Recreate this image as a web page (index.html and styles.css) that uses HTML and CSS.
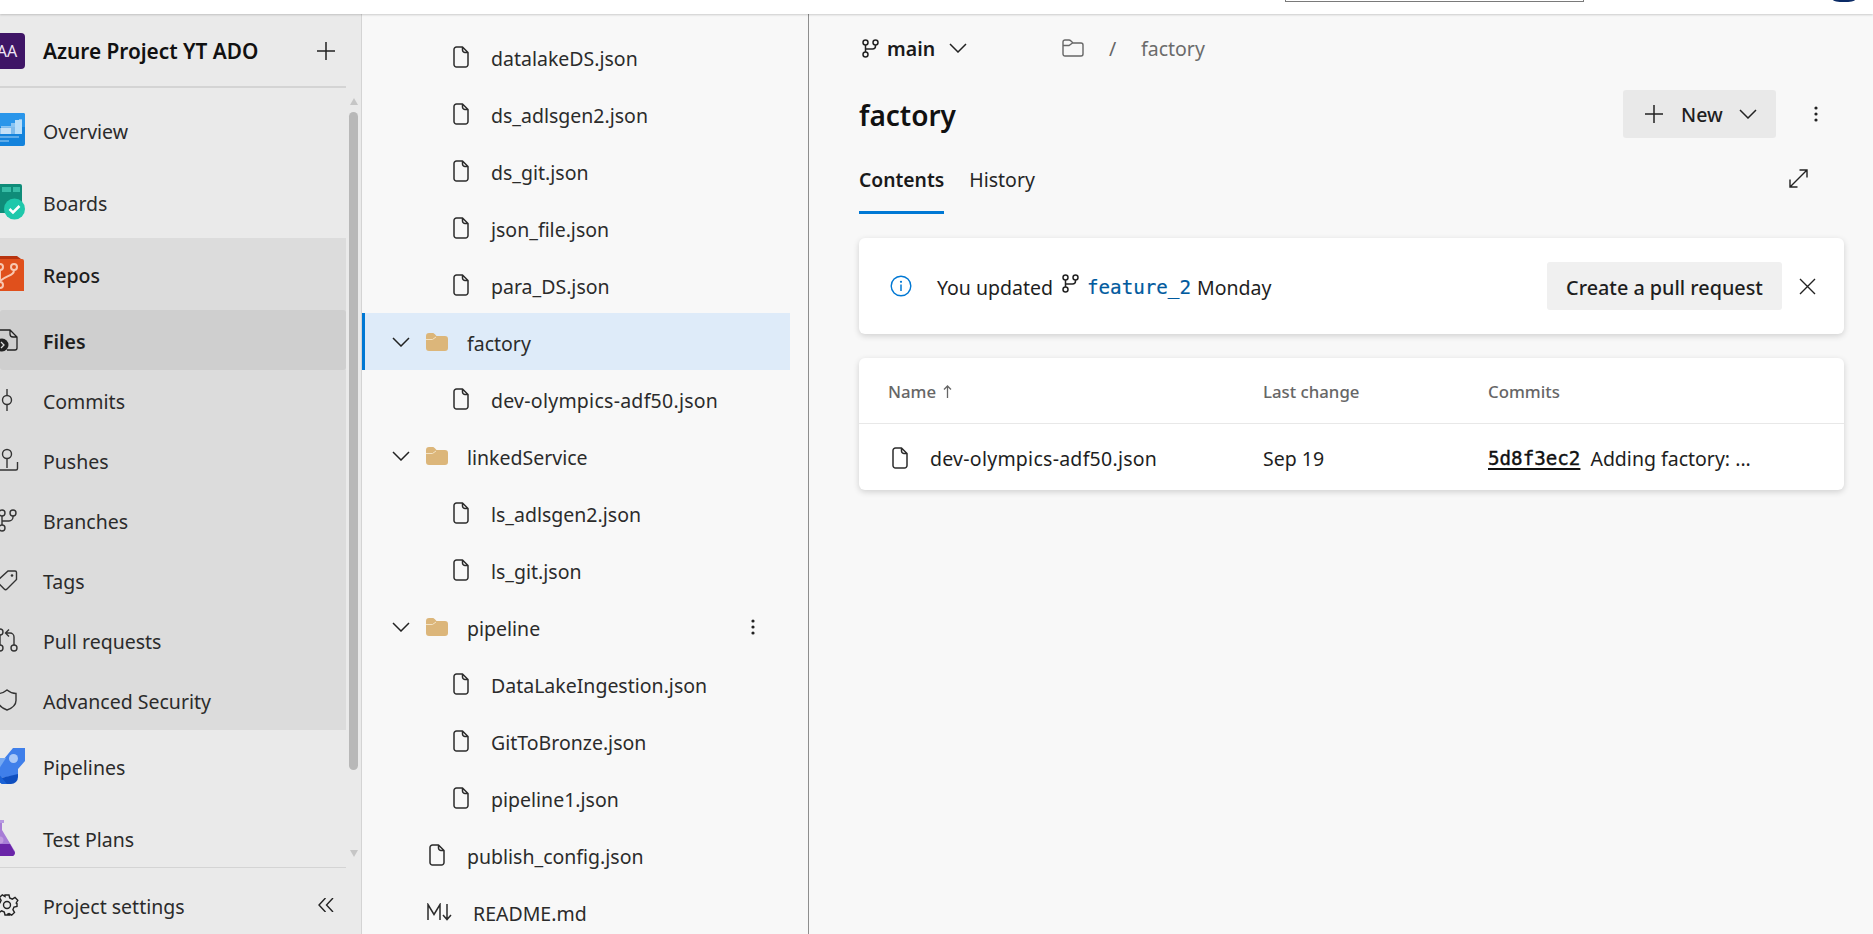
FILE: index.html
```html
<!DOCTYPE html>
<html lang="en">
<head>
<meta charset="utf-8">
<title>factory - Repos</title>
<link rel="stylesheet" href="styles.css">
</head>
<body>
<svg class="defs" width="0" height="0" aria-hidden="true">
  <symbol id="i-file" viewBox="0 0 16 22"><path d="M3.500 1h6L15 6.500v12a2.500 2.500 0 0 1-2.500 2.500h-9A2.500 2.500 0 0 1 1 18.500v-15A2.500 2.500 0 0 1 3.500 1zM9.500 1v3a2.500 2.500 0 0 0 2.500 2.500h3" fill="none" stroke="#2b2b2b" stroke-width="1.500" stroke-linejoin="round"/></symbol>
  <symbol id="i-folder" viewBox="0 0 22 18"><path d="M0 3a3 3 0 0 1 3-3h3.500c1 0 1.500.4 2.200 1.100L10.500 3H19a3 3 0 0 1 3 3v9a3 3 0 0 1-3 3H3a3 3 0 0 1-3-3z" fill="#dcb67a"/><path d="M0 6.500h6.500L10 4" fill="none" stroke="#f4e3c4" stroke-width="1"/></symbol>
  <symbol id="i-chev" viewBox="0 0 18 10"><path d="M1 1l8 8 8-8" fill="none" stroke="#222" stroke-width="1.500"/></symbol>
  <symbol id="i-branch" viewBox="0 0 17 19"><g fill="none" stroke="#222" stroke-width="1.500"><circle cx="3.500" cy="3.500" r="2.500"/><circle cx="13.500" cy="3.500" r="2.500"/><circle cx="3.500" cy="15.500" r="2.500"/><path d="M3.500 6v7M13.500 6v1a3 3 0 0 1-3 3h-7"/></g></symbol>
  <symbol id="i-plus" viewBox="0 0 18 18"><path d="M9 0v18M0 9h18" stroke="#222" stroke-width="1.500"/></symbol>
  <symbol id="i-kebab" viewBox="0 0 4 16"><circle cx="2" cy="2" r="1.600" fill="#222"/><circle cx="2" cy="8" r="1.600" fill="#222"/><circle cx="2" cy="14" r="1.600" fill="#222"/></symbol>
</svg>

<header class="topbar">
  <div class="search-edge"></div>
  <div class="avatar-edge"></div>
</header>

<div class="app">
  <aside class="sidebar">
    <div class="project">
      <span class="slot"><span class="avatar">AA</span></span>
      <span class="project-name">Azure Project YT ADO</span>
      <svg class="project-add"><use href="#i-plus"/></svg>
    </div>

    <nav class="nav">
      <a class="nav-row">
        <span class="slot"><svg class="svc" viewBox="0 0 36 36"><rect y="1" width="36" height="33" rx="2" fill="#1483dc"/><path d="M0 1h34a2 2 0 0 1 2 2v12H0z" fill="#2a96ea"/><path d="M12 14h10V11h8V7h3v15H12z" fill="#ffffff" opacity=".45"/><path d="M11 16h11v6H11z" fill="#ffffff" opacity=".55"/><path d="M26 8h7v14h-7z" fill="#b9def9"/><path d="M0 25h30" stroke="#a8d4f5" stroke-width="1"/><path d="M0 29h20" stroke="#a8d4f5" stroke-width="1"/></svg></span>
        <span class="lbl">Overview</span>
      </a>
      <a class="nav-row">
        <span class="slot"><svg class="svc" viewBox="0 0 36 36"><rect y="0" width="33" height="29" rx="2" fill="#0f8c79"/><rect x="2" y="3" width="9" height="5" fill="#66e0c8"/><rect x="13" y="3" width="9" height="5" fill="#36bca5"/><rect x="24" y="3" width="7" height="5" fill="#36bca5"/><rect x="2" y="11" width="9" height="5" fill="#36bca5"/><circle cx="25.500" cy="25" r="10.500" fill="#1fc8ab"/><path d="M20.500 25l3.500 3.500 6.500-6.500" fill="none" stroke="#fff" stroke-width="2.500"/></svg></span>
        <span class="lbl">Boards</span>
      </a>
      <div class="nav-group">
        <a class="nav-row is-strong">
          <span class="slot"><svg class="svc" viewBox="0 0 36 36"><path d="M0 0h28l4 3H0z" fill="#b8330e"/><path d="M0 3h33a2 2 0 0 1 2 2v30H0z" fill="#e0501c"/><g fill="none" stroke="#f8c7b0" stroke-width="2"><circle cx="11" cy="11" r="3"/><circle cx="25" cy="11" r="3"/><circle cx="11" cy="29" r="3"/><path d="M11 14v12M25 14c0 6-7 5-14 11"/></g></svg></span>
          <span class="lbl">Repos</span>
        </a>
        <a class="sub-row is-current">
          <span class="slot"><svg class="glyph" viewBox="0 0 24 24"><path d="M5 2h10l7 7v11a2 2 0 0 1-2 2h-8M15 2v4a3 3 0 0 0 3 3h4" fill="none" stroke="#222" stroke-width="1.300"/><circle cx="7" cy="17" r="6.500" fill="#222"/><path d="M6 14l3 3-3 3" fill="none" stroke="#ddd" stroke-width="1.300"/></svg></span>
          <span class="lbl">Files</span>
        </a>
        <a class="sub-row">
          <span class="slot"><svg class="glyph" viewBox="0 0 24 24"><g fill="none" stroke="#333" stroke-width="1.400"><circle cx="12" cy="12" r="4.500"/><path d="M12 1v6.500M12 16.500V23"/></g></svg></span>
          <span class="lbl">Commits</span>
        </a>
        <a class="sub-row">
          <span class="slot"><svg class="glyph" viewBox="0 0 24 24"><g fill="none" stroke="#333" stroke-width="1.400"><circle cx="12" cy="6" r="4.500"/><path d="M12 10.500V20M0 22h21a1.500 1.500 0 0 0 1.500-1.500V14"/></g></svg></span>
          <span class="lbl">Pushes</span>
        </a>
        <a class="sub-row">
          <span class="slot"><svg class="glyph" viewBox="0 0 24 24"><g fill="none" stroke="#333" stroke-width="1.400"><circle cx="7" cy="5" r="3"/><circle cx="18" cy="5" r="3"/><circle cx="7" cy="20" r="3"/><path d="M7 8v9M18 8v1a4 4 0 0 1-4 4H7"/></g></svg></span>
          <span class="lbl">Branches</span>
        </a>
        <a class="sub-row">
          <span class="slot"><svg class="glyph" viewBox="0 0 24 24"><g fill="none" stroke="#333" stroke-width="1.400"><path d="M13 3h7a1.500 1.500 0 0 1 1.500 1.500v7L12 21a2 2 0 0 1-2.800 0L3 14.800a2 2 0 0 1 0-2.800z"/></g><circle cx="17" cy="7.500" r="1.300" fill="#333"/></svg></span>
          <span class="lbl">Tags</span>
        </a>
        <a class="sub-row">
          <span class="slot"><svg class="glyph" viewBox="0 0 24 24"><g fill="none" stroke="#333" stroke-width="1.400"><circle cx="5" cy="4" r="3"/><circle cx="5" cy="20" r="3"/><circle cx="19" cy="20" r="3"/><path d="M5 7v10M19 17V9a4 4 0 0 0-4-4h-4M14 1.500L10.500 5l3.500 3.500"/></g></svg></span>
          <span class="lbl">Pull requests</span>
        </a>
        <a class="sub-row">
          <span class="slot"><svg class="glyph" viewBox="0 0 24 24"><path d="M12 2c3 2.500 6 3.500 9 3.500v7c0 4.500-3.500 7.500-9 9.500-5.500-2-9-5-9-9.500v-7c3 0 6-1 9-3.500z" fill="none" stroke="#333" stroke-width="1.400"/></svg></span>
          <span class="lbl">Advanced Security</span>
        </a>
      </div>
      <a class="nav-row">
        <span class="slot"><svg class="svc" viewBox="0 0 36 36"><path d="M24 0h12v13l-7 8v6L12 30 5 23z" fill="#3f7fea"/><path d="M0 25L11 10h6L4 30z" fill="#74a8f2"/><path d="M8 31l21-5v3a7 7 0 0 1-7 7H13z" fill="#0f4fc0"/><path d="M13 36l-9-6 5-5 9 11z" fill="#1a62d6"/><circle cx="24.500" cy="10.500" r="4.500" fill="#a9c8f7"/></svg></span>
        <span class="lbl">Pipelines</span>
      </a>
      <a class="nav-row">
        <span class="slot"><svg class="svc" viewBox="0 0 36 36"><path d="M0 0h15v3H13v7l12 20a3 3 0 0 1-3 5H0z" fill="#a77dd6"/><path d="M0 0h15v3H0z" fill="#b79ae0"/><path d="M0 24h21l4 7a3 3 0 0 1-3 5H0z" fill="#6a25a8"/><circle cx="4" cy="24" r="6" fill="#cfaee9"/><circle cx="11" cy="20" r="3.500" fill="#c09bdf"/></svg></span>
        <span class="lbl">Test Plans</span>
      </a>
    </nav>

    <div class="settings">
      <span class="slot"><svg class="glyph" viewBox="0 0 24 24"><g fill="none" stroke="#222" stroke-width="1.400"><circle cx="12" cy="12" r="3.500"/><path d="M10 2h4l.7 3 2.600 1.100 2.700-1.600 2.800 2.800-1.600 2.700L22 10.600v2.800l-3 .7-1.100 2.600 1.600 2.700-2.800 2.800-2.700-1.600-1 .4L14 22h-4l-.7-3-2.600-1.100L4 19.500 1.200 16.700l1.600-2.700L2 13.400v-2.800l3-.7L6.100 7.300 4.500 4.600 7.300 1.800 10 3.400z"/></g></svg></span>
      <span class="lbl">Project settings</span>
      <svg class="collapse" viewBox="0 0 16 14"><path d="M7.500 0L1 7l6.500 7M15 0L8.500 7l6.500 7" fill="none" stroke="#222" stroke-width="1.400"/></svg>
    </div>

    <div class="scrollbar">
      <span class="arrow-up"></span>
      <span class="thumb"></span>
      <span class="arrow-down"></span>
    </div>
  </aside>

  <section class="tree">
    <div class="t-row lvl2"><svg class="ic-file"><use href="#i-file"/></svg><span class="name">datalakeDS.json</span></div>
    <div class="t-row lvl2"><svg class="ic-file"><use href="#i-file"/></svg><span class="name">ds_adlsgen2.json</span></div>
    <div class="t-row lvl2"><svg class="ic-file"><use href="#i-file"/></svg><span class="name">ds_git.json</span></div>
    <div class="t-row lvl2"><svg class="ic-file"><use href="#i-file"/></svg><span class="name">json_file.json</span></div>
    <div class="t-row lvl2"><svg class="ic-file"><use href="#i-file"/></svg><span class="name">para_DS.json</span></div>
    <div class="t-row lvl1 is-selected"><svg class="ic-chev"><use href="#i-chev"/></svg><svg class="ic-folder"><use href="#i-folder"/></svg><span class="name">factory</span></div>
    <div class="t-row lvl2"><svg class="ic-file"><use href="#i-file"/></svg><span class="name wide">dev-olympics-adf50.json</span></div>
    <div class="t-row lvl1"><svg class="ic-chev"><use href="#i-chev"/></svg><svg class="ic-folder"><use href="#i-folder"/></svg><span class="name">linkedService</span></div>
    <div class="t-row lvl2"><svg class="ic-file"><use href="#i-file"/></svg><span class="name">ls_adlsgen2.json</span></div>
    <div class="t-row lvl2"><svg class="ic-file"><use href="#i-file"/></svg><span class="name">ls_git.json</span></div>
    <div class="t-row lvl1"><svg class="ic-chev"><use href="#i-chev"/></svg><svg class="ic-folder"><use href="#i-folder"/></svg><span class="name">pipeline</span><svg class="ic-kebab"><use href="#i-kebab"/></svg></div>
    <div class="t-row lvl2"><svg class="ic-file"><use href="#i-file"/></svg><span class="name">DataLakeIngestion.json</span></div>
    <div class="t-row lvl2"><svg class="ic-file"><use href="#i-file"/></svg><span class="name">GitToBronze.json</span></div>
    <div class="t-row lvl2"><svg class="ic-file"><use href="#i-file"/></svg><span class="name">pipeline1.json</span></div>
    <div class="t-row lvl1-file"><svg class="ic-file"><use href="#i-file"/></svg><span class="name">publish_config.json</span></div>
    <div class="t-row lvl1-md"><svg class="ic-md" viewBox="0 0 25 18"><path d="M1 17V1.500l6 10 6-10V17M20 1v15M16 12l4 4.500 4-4.500" fill="none" stroke="#2b2b2b" stroke-width="1.500"/></svg><span class="name">README.md</span></div>
  </section>

  <main class="content">
    <div class="crumbs">
      <svg class="ic-branch"><use href="#i-branch"/></svg>
      <span class="branch-name">main</span>
      <svg class="ic-branch-chev"><use href="#i-chev"/></svg>
      <svg class="ic-crumb-folder" viewBox="0 0 22 18"><path d="M1 3a2 2 0 0 1 2-2h4c1 0 1.500.5 2 1l2 2h8a2 2 0 0 1 2 2v9a2 2 0 0 1-2 2H3a2 2 0 0 1-2-2zM1 6.500h6L10.500 4" fill="none" stroke="#666" stroke-width="1.400"/></svg>
      <span class="crumb-sep">/</span>
      <span class="crumb">factory</span>
    </div>

    <div class="title-row">
      <h1 class="title">factory</h1>
      <button class="btn-new"><svg class="ic-new-plus"><use href="#i-plus"/></svg><span>New</span><svg class="ic-new-chev"><use href="#i-chev"/></svg></button>
      <svg class="ic-more"><use href="#i-kebab"/></svg>
    </div>

    <div class="tabs">
      <span class="tab is-active">Contents</span>
      <span class="tab">History</span>
      <svg class="ic-expand" viewBox="0 0 19 19"><path d="M18 1L1 18M10.500 1H18v7.500M1 10.500V18h7.500" fill="none" stroke="#222" stroke-width="1.400"/></svg>
    </div>

    <div class="card banner">
      <svg class="ic-info" viewBox="0 0 22 22"><circle cx="11" cy="11" r="9.800" fill="none" stroke="#0078d4" stroke-width="1.400"/><circle cx="11" cy="6.800" r="1.100" fill="#0078d4"/><path d="M11 9.500v6.500" stroke="#0078d4" stroke-width="1.500"/></svg>
      <span class="banner-text">You updated</span>
      <svg class="ic-branch-sm"><use href="#i-branch"/></svg>
      <span class="banner-branch">feature_2</span>
      <span class="banner-text">Monday</span>
      <button class="btn-pr">Create a pull request</button>
      <svg class="ic-close" viewBox="0 0 17 17"><path d="M1 1l15 15M16 1L1 16" stroke="#222" stroke-width="1.400"/></svg>
    </div>

    <div class="card table">
      <div class="t-head">
        <span class="head-name">Name <svg class="sort" viewBox="0 0 9 13"><path d="M4.500 13V1M1 4.500L4.500 1 8 4.500" fill="none" stroke="#666" stroke-width="1.300"/></svg></span>
        <span>Last change</span>
        <span>Commits</span>
      </div>
      <div class="t-body">
        <span class="cell-name"><svg class="ic-file-sm"><use href="#i-file"/></svg><span class="wide">dev-olympics-adf50.json</span></span>
        <span>Sep 19</span>
        <span class="cell-commit"><a class="sha">5d8f3ec2</a><span>Adding factory: ...</span></span>
      </div>
    </div>
  </main>
</div>
</body>
</html>
```

FILE: styles.css
```css
* { box-sizing: border-box; }
html, body { margin: 0; height: 100%; }
body {
  width: 1873px;
  height: 934px;
  overflow: hidden;
  background: #f8f8f8;
  color: #262626;
  font-family: "Noto Sans", "Open Sans", "Liberation Sans", sans-serif;
  font-size: 19.5px;
}
.defs { position: absolute; }
svg { display: block; flex: none; }
h1 { margin: 0; }
button { font: inherit; border: 0; color: inherit; }
.wide { letter-spacing: .26px; }

/* top */
.topbar {
  height: 14px;
  background: #fff;
  display: flex;
  box-shadow: 0 1px 2px rgba(0,0,0,.18);
  position: relative;
  z-index: 2;
}
.search-edge {
  width: 299px;
  height: 2px;
  margin-left: 1285px;
  border: 1px solid #7a7a7a;
  border-top: 0;
}
.avatar-edge {
  width: 22px;
  height: 2px;
  margin-left: 249px;
  background: #0b2b66;
  border-radius: 0 0 11px 11px / 0 0 2px 2px;
}

.app { display: flex; height: 920px; }

/* sidebar */
.sidebar {
  width: 362px;
  flex: none;
  background: #eaeaea;
  border-right: 1px solid #d4d4d4;
  display: flex;
  flex-direction: column;
  position: relative;
  color: #2b2b2b;
}
.slot {
  width: 36px;
  margin-left: -11px;
  margin-right: 18px;
  flex: none;
  display: flex;
  justify-content: center;
}
.lbl { padding-top: 2px; }
.project {
  height: 74px;
  margin-right: 15px;
  padding-top: 2px;
  border-bottom: 2px solid #d4d4d4;
  display: flex;
  align-items: center;
}
.avatar {
  width: 36px;
  height: 36px;
  border-radius: 4px;
  background: #3f1566;
  color: #efe6f7;
  font-size: 16px;
  display: flex;
  align-items: center;
  justify-content: center;
}
.project-name { font-weight: 600; color: #111; font-size: 20.800px; }
.project-add { width: 18px; height: 18px; margin-left: auto; margin-right: 11px; }
.nav { height: 779px; margin-right: 15px; padding-top: 6px; overflow: hidden; }
.nav-row { height: 72px; display: flex; align-items: center; }
.nav-row.is-strong { font-weight: 500; color: #1e1e1e; }
.nav-group { background: #dcdcdc; }
.sub-row { height: 60px; display: flex; align-items: center; }
.sub-row.is-current { background: #cfcfcf; font-weight: 600; border-radius: 3px; color: #1e1e1e; }
.svc { width: 36px; height: 36px; }
.glyph { width: 24px; height: 24px; }
.settings {
  height: 67px;
  margin-right: 15px;
  padding-top: 8px;
  border-top: 1px solid #d4d4d4;
  display: flex;
  align-items: center;
}
.collapse { width: 16px; height: 14px; margin-left: auto; margin-right: 12px; }

/* overlay scrollbar */
.scrollbar {
  position: absolute;
  left: 349px;
  top: 84px;
  width: 9px;
  display: flex;
  flex-direction: column;
  align-items: center;
}
.arrow-up { border: 4.500px solid transparent; border-top: 0; border-bottom: 7px solid #c6c6c6; }
.thumb { width: 9px; height: 658px; margin-top: 7px; border-radius: 5px; background: #b8b8b8; }
.arrow-down { border: 4.500px solid transparent; border-bottom: 0; border-top: 7px solid #c6c6c6; margin-top: 80px; }

/* tree */
.tree {
  width: 447px;
  flex: none;
  padding: 14px 18px 0 0;
  border-right: 1px solid #8e8e8e;
  background: #f8f8f8;
  color: #2b2b2b;
  overflow: hidden;
}
.t-row { height: 57px; display: flex; align-items: center; position: relative; }
.name { padding-top: 4px; }
.lvl2 { padding-left: 91px; }
.lvl1 { padding-left: 30px; }
.lvl1-file { padding-left: 67px; }
.lvl1-md { padding-left: 65px; }
.is-selected { background: #deebf9; box-shadow: inset 3px 0 0 #0078d4; }
.ic-file { width: 16px; height: 22px; margin-right: 22px; }
.ic-chev { width: 18px; height: 10px; margin-right: 16px; }
.ic-folder { width: 22px; height: 18px; margin-right: 19px; }
.ic-kebab { width: 4px; height: 16px; margin-left: auto; margin-right: 35px; }
.ic-md { width: 25px; height: 18px; margin-right: 21px; }

/* content */
.content { flex: 1; min-width: 0; padding: 0 29px 0 50px; }
.crumbs { height: 68px; display: flex; align-items: center; }
.ic-branch { width: 17px; height: 19px; margin-left: 3px; margin-right: 8px; }
.branch-name { font-weight: 600; color: #1a1a1a; width: 62px; }
.ic-branch-chev { width: 18px; height: 10px; margin-right: 95px; }
.ic-crumb-folder { width: 22px; height: 18px; margin-right: 25px; }
.crumb-sep { color: #666; width: 32px; }
.crumb { color: #6b6b6b; }

.title-row { height: 64px; display: flex; align-items: center; }
.title { font-size: 28px; font-weight: 600; color: #111; line-height: 1; margin-right: auto; padding-top: 2px; }
.btn-new {
  width: 153px;
  height: 48px;
  padding: 0 0 0 22px;
  background: #e9e9e9;
  border-radius: 3px;
  display: flex;
  align-items: center;
  font-weight: 500;
  color: #1e1e1e;
}
.ic-new-plus { width: 18px; height: 18px; margin-right: 18px; }
.btn-new span { width: 58px; text-align: left; }
.ic-new-chev { width: 18px; height: 10px; }
.ic-more { width: 4px; height: 16px; margin-left: 38px; margin-right: 26px; }

.tabs { height: 68px; display: flex; align-items: stretch; }
.tab { padding-top: 20px; margin-right: 25px; border-bottom: 3px solid transparent; }
.tab.is-active { font-weight: 600; color: #1a1a1a; border-bottom-color: #0078d4; font-size: 19.300px; }
.ic-expand { width: 19px; height: 19px; margin-left: auto; margin-right: 36px; margin-top: 23px; }

.card { background: #fff; border-radius: 6px; box-shadow: 0 2px 6px rgba(0,0,0,.16); }
.banner { margin-top: 24px; height: 96px; display: flex; align-items: center; padding-left: 31px; color: #1e1e1e; }
.ic-info { width: 22px; height: 22px; margin-right: 25px; }
.banner-text { white-space: nowrap; padding-top: 2px; }
.ic-branch-sm { width: 17px; height: 19px; margin: -6px 8px 0 9px; }
.banner-branch {
  font-family: "DejaVu Sans Mono", "Liberation Mono", monospace;
  font-size: 19.200px;
  color: #005a9e;
  margin-right: 6px;
  padding-top: 2px;
  -webkit-text-stroke: .2px #005a9e;
}
.btn-pr {
  width: 235px;
  height: 48px;
  margin-left: auto;
  padding-top: 4px;
  background: #f0f0f0;
  border-radius: 3px;
  font-weight: 500;
  font-size: 19.800px;
  color: #1e1e1e;
}
.ic-close { width: 17px; height: 17px; margin: 0 28px 0 17px; }

.table { margin-top: 24px; height: 132px; }
.t-head, .t-body { display: grid; grid-template-columns: 375px 225px 1fr; padding-left: 29px; align-items: center; padding-top: 2px; }
.t-head { height: 66px; border-bottom: 1px solid #e8e8e8; font-size: 16.800px; font-weight: 500; color: #666; }
.head-name { display: flex; align-items: center; gap: 7px; }
.sort { width: 9px; height: 13px; }
.t-body { height: 66px; color: #1e1e1e; }
.cell-name { display: flex; align-items: center; }
.ic-file-sm { width: 16px; height: 22px; margin: 0 22px 0 4px; }
.cell-commit { display: flex; align-items: center; gap: 10px; white-space: nowrap; }
.sha {
  font-family: "DejaVu Sans Mono", "Liberation Mono", monospace;
  font-size: 19.200px;
  color: #111;
  -webkit-text-stroke: .4px #111;
  text-decoration: underline;
  text-underline-offset: 3px;
  text-decoration-thickness: 2px;
}
```
